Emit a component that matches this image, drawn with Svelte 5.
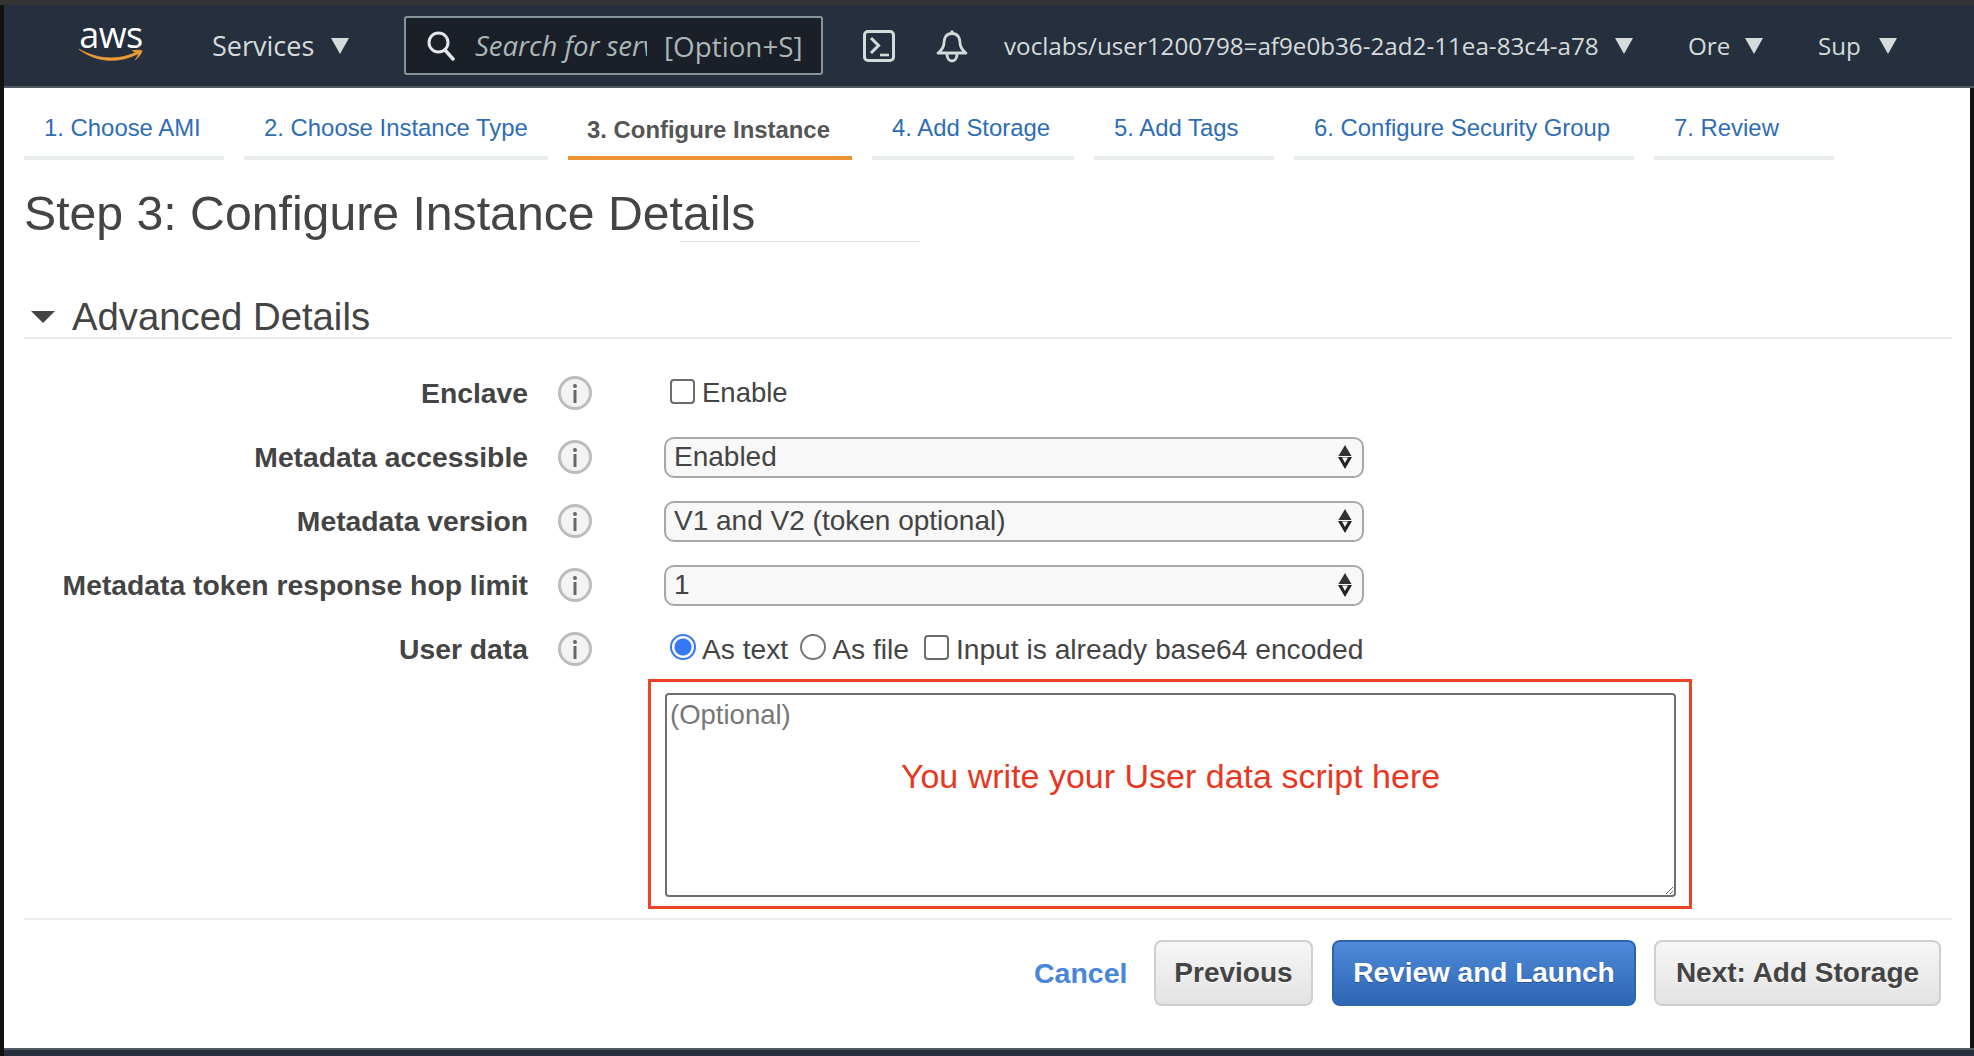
<script>
  const tabs = [
    { label: '1. Choose AMI', w: 200 },
    { label: '2. Choose Instance Type', w: 304 },
    { label: '3. Configure Instance', w: 284, active: true },
    { label: '4. Add Storage', w: 202 },
    { label: '5. Add Tags', w: 180 },
    { label: '6. Configure Security Group', w: 340 },
    { label: '7. Review', w: 180 }
  ];
  const selects = [
    { label: 'Metadata accessible', value: 'Enabled' },
    { label: 'Metadata version', value: 'V1 and V2 (token optional)' },
    { label: 'Metadata token response hop limit', value: '1' }
  ];
</script>

{#snippet info()}
  <svg class="info" viewBox="0 0 34 34" width="34" height="34" aria-hidden="true">
    <circle cx="17" cy="17" r="15.500" fill="#f3f3f3" stroke="#bdbdbd" stroke-width="3" />
    <circle cx="17" cy="10" r="2" fill="#666" />
    <rect x="15.500" y="14" width="3" height="13" fill="#666" />
  </svg>
{/snippet}

{#snippet caret(cls)}
  <svg class={cls} viewBox="0 0 20 18" aria-hidden="true"><path d="M1 1h18L10 17z" fill="#d5dbdb" /></svg>
{/snippet}

<div class="frame">
  <header class="nav">
    <div class="logo">
      <span class="aws">aws</span>
      <svg class="smile" viewBox="0 0 68 16" aria-hidden="true">
        <path d="M1 2C10 9 22 13.500 34 13.500C44 13.500 53 11 60 7.500L62.500 6.500C62 8.500 60.500 11 59 13C62 10.500 65 7.500 66 3.500C63 3 59.500 3 56 3.500L59.500 5.500C50 9.500 42 11 34 11C22 11 11 7.500 1 2Z" fill="#ec9a32" stroke="#ec9a32" stroke-width=".8" stroke-linejoin="round" />
      </svg>
    </div>
    <span class="menu services">Services</span>
    {@render caret('caret services-caret')}
    <div class="search">
      <svg class="mag" viewBox="0 0 28 30" aria-hidden="true">
        <circle cx="11.500" cy="11.500" r="9.500" fill="none" stroke="#e3e7e7" stroke-width="3" />
        <path d="M18 19l8 9" stroke="#e3e7e7" stroke-width="3.400" stroke-linecap="round" />
      </svg>
      <span class="placeholder">Search for serv</span>
      <span class="shortcut">[Option+S]</span>
    </div>
    <svg class="console" viewBox="0 0 32 32" aria-hidden="true">
      <rect x="1.500" y="1.500" width="29" height="29" rx="3.500" fill="none" stroke="#d5dbdb" stroke-width="3" />
      <path d="M8 8l7.500 7.500L8 23" fill="none" stroke="#d5dbdb" stroke-width="3" />
      <path d="M17 25h9" stroke="#d5dbdb" stroke-width="2.600" />
    </svg>
    <svg class="bell" viewBox="0 0 32 34" aria-hidden="true">
      <path d="M16 1.500v3M16 4.500c-5.500 0-8 4-8 9 0 5-2 7.500-6 10.500h28c-4-3-6-5.500-6-10.500 0-5-2.500-9-8-9z" fill="none" stroke="#d5dbdb" stroke-width="2.800" stroke-linejoin="round" />
      <path d="M11 25c0 4 2 7 5 7s5-3 5-7" fill="none" stroke="#d5dbdb" stroke-width="2.800" />
    </svg>
    <span class="menu account">voclabs/user1200798=af9e0b36-2ad2-11ea-83c4-a78</span>
    {@render caret('caret account-caret')}
    <span class="menu region">Ore</span>
    {@render caret('caret region-caret')}
    <span class="menu support">Sup</span>
    {@render caret('caret support-caret')}
  </header>

  <main class="panel">
    <nav class="tabs">
      {#each tabs as t}
        <a class="tab" class:active={t.active} style="width: {t.w}px" href="#top">{t.label}</a>
      {/each}
    </nav>

    <div class="title-row">
      <h1>Step 3: Configure Instance Details</h1>
      <span class="stray"></span>
    </div>

    <h2 class="section">
      <svg class="tri" viewBox="0 0 24 12" aria-hidden="true"><path d="M0 0h24L12 12z" fill="#444" /></svg>
      Advanced Details
    </h2>

    <div class="form">
      <div class="row">
        <span class="label">Enclave</span>
        {@render info()}
        <div class="opts">
          <span class="check"></span><span class="opt enable">Enable</span>
        </div>
      </div>

      {#each selects as s}
        <div class="row">
          <span class="label">{s.label}</span>
          {@render info()}
          <div class="select">
            <span>{s.value}</span>
            <svg class="updown" viewBox="0 0 18 24" aria-hidden="true">
              <path d="M9 0l6.500 11h-13z" fill="#333" />
              <path d="M2 12h14l-7 12z" fill="#222" />
              <path d="M6 12.500h6L9 18z" fill="#f8f8f8" />
            </svg>
          </div>
        </div>
      {/each}

      <div class="row">
        <span class="label">User data</span>
        {@render info()}
        <div class="opts">
          <span class="radio on"></span><span class="opt text">As text</span>
          <span class="radio"></span><span class="opt file">As file</span>
          <span class="check small"></span><span class="opt">Input is already base64 encoded</span>
        </div>
      </div>
    </div>

    <div class="callout">
      <div class="ta-wrap">
        <textarea placeholder="(Optional)"></textarea>
        <span class="note">You write your User data script here</span>
      </div>
    </div>

    <footer class="actions">
      <a class="cancel" href="#top">Cancel</a>
      <button class="btn prev">Previous</button>
      <button class="btn primary">Review and Launch</button>
      <button class="btn next">Next: Add Storage</button>
    </footer>
  </main>

  <div class="bottom"></div>
</div>

<style>
  :global(body) { margin: 0; background: #0c0c0c; }
  .frame {
    width: 1974px; height: 1056px; overflow: hidden; display: flex; flex-direction: column;
    background: #111; font-family: "Liberation Sans", Arial, sans-serif; box-sizing: border-box;
    border-top: 5px solid #333;
  }
  .nav {
    flex: none; height: 83px; margin-left: 4px; background: #252f3e; border-bottom: 2px solid #545b64;
    box-sizing: border-box;
    display: flex; align-items: center; color: #d5dbdb; font-family: "Open Sans", sans-serif;
  }
  .logo { width: 66px; margin-left: 74px; display: flex; flex-direction: column; align-items: center; margin-top: -4px; }
  .aws { color: #fff; font: 400 36px/27px "Open Sans", sans-serif; letter-spacing: -.5px; height: 25px; margin-top: -3px; }
  .smile { width: 66px; height: 16px; margin-top: 1px; }
  .menu { font-size: 25px; color: #d5dbdb; white-space: nowrap; }
  .services { margin-left: 68px; width: 118px; font-size: 27px; }
  .caret { width: 20px; height: 18px; flex: none; }
  .services-caret { margin-right: 54px; }
  .search {
    width: 419px; height: 59px; box-sizing: border-box; background: #1a1f28; border: 2px solid #87959b;
    border-radius: 3px; display: flex; align-items: center; flex: none;
  }
  .mag { width: 28px; height: 30px; margin-left: 21px; flex: none; }
  .placeholder {
    margin-left: 20px; width: 172px; overflow: hidden; white-space: nowrap; flex: none;
    font-style: italic; font-size: 27.500px; color: #aab7b8;
  }
  .shortcut { margin-left: 17px; font-size: 27.800px; color: #aab7b8; white-space: nowrap; }
  .console { width: 32px; height: 32px; margin-left: 40px; flex: none; }
  .bell { width: 32px; height: 34px; margin-left: 41px; flex: none; }
  .account { margin-left: 36px; width: 610px; font-size: 24.200px; }
  .account-caret { margin-right: 54px; }
  .region { width: 56px; font-size: 24.200px; }
  .region-caret { margin-right: 54px; }
  .support { width: 60px; font-size: 24.200px; }

  .panel {
    flex: none; width: 1966px; height: 960px; margin-left: 4px; background: #fff; color: #444;
    position: relative; box-sizing: border-box; padding: 0 18px 0 20px;
  }
  .tabs { display: flex; gap: 20px; height: 72px; }
  .tab {
    box-sizing: border-box; height: 72px; border-bottom: 4px solid #eaeded; text-decoration: none;
    color: #2e6db5; font-size: 23.900px; padding: 26px 0 0 20px; line-height: 28px; white-space: nowrap;
  }
  .tab.active { border-bottom-color: #ec9432; color: #555; font-weight: 700; padding: 28px 0 0 19px; }

  .title-row { height: 91px; position: relative; }
  h1 { margin: 0; padding-top: 27px; font-weight: 400; font-size: 48.200px; line-height: 52px; color: #444; }
  .stray { position: absolute; left: 656px; top: 81px; width: 240px; height: 1px; background: #ddd; }

  .section {
    margin: 0; height: 88px; box-sizing: border-box; border-bottom: 2px solid #eaeded; padding-top: 45px;
    font-weight: 400; font-size: 38.300px; line-height: 38px; color: #444; display: flex; align-items: center; gap: 17px;
    width: 1928px;
  }
  .tri { width: 24px; height: 12px; margin-left: 7px; margin-top: 0; flex: none; }

  .form { display: flex; flex-direction: column; }
  .row { display: flex; align-items: center; height: 64px; }
  .row:first-child { margin-top: 22px; }
  .label { width: 504px; text-align: right; font-weight: 700; font-size: 28.300px; color: #444; white-space: nowrap; }
  .info { flex: none; margin-left: 30px; }
  .opts { display: flex; align-items: center; margin-left: 78px; font-size: 28.200px; color: #444; }
  .opt { white-space: nowrap; }
  .opt.enable { font-size: 27.500px; }
  .check {
    width: 25px; height: 25px; box-sizing: border-box; border: 2px solid #6b6b6b; border-radius: 4px;
    background: #fff; margin-right: 7px; margin-top: -4px; flex: none;
  }
  .check.small { margin-left: 13px; margin-right: 7px; }
  .radio {
    width: 26px; height: 26px; box-sizing: border-box; border: 2px solid #767676; border-radius: 50%;
    background: #fff; margin-right: 6px; margin-top: -4px; flex: none;
  }
  .radio.on { border: 2px solid #3478f6; background: radial-gradient(circle, #3478f6 0 8px, #fff 9px); }
  .opt.text { margin-right: 12px; }
  .opt.file { margin-right: 2px; }
  .select {
    width: 700px; height: 41px; margin-left: 72px; box-sizing: border-box; background: #f8f8f8;
    border: 2px solid #a8a8a8; border-radius: 10px; display: flex; align-items: center; padding: 0 8px 0 8px;
    font-size: 28px; color: #444; justify-content: space-between;
  }
  .updown { width: 18px; height: 24px; flex: none; }

  .callout {
    width: 1044px; height: 230px; box-sizing: border-box; margin: -2px 0 0 624px; border: 3px solid #ea4325;
    padding: 11px 13px 9px 14px;
  }
  .ta-wrap { position: relative; height: 100%; }
  textarea {
    display: block; width: 100%; height: 100%; box-sizing: border-box; border: 2px solid #707070; border-radius: 4px;
    background: #fff; font: 27.500px/32px "Liberation Sans", Arial, sans-serif; padding: 4px 3px; resize: both; outline: none;
  }
  textarea::placeholder { color: #777; opacity: 1; }
  .note {
    position: absolute; left: 0; right: 0; top: 64px; text-align: center; font-size: 34px; line-height: 38px;
    color: #e8371f; pointer-events: none;
  }

  .actions {
    width: 1928px; margin-top: 9px; border-top: 2px solid #eaeded; box-sizing: border-box; height: 88px;
    display: flex; align-items: flex-start; padding-top: 20px;
  }
  .cancel {
    margin-left: 1010px; width: 92px; margin-right: 28px; line-height: 66px; font-size: 28.500px; font-weight: 700;
    color: #4a86d8; text-decoration: none; white-space: nowrap;
  }
  .btn {
    height: 66px; box-sizing: border-box; border-radius: 8px; font: 700 28px "Liberation Sans", Arial, sans-serif;
    padding: 0; white-space: nowrap; border: 2px solid #cfcfcf; color: #444;
    background: linear-gradient(#f6f6f6, #e3e3e3); text-shadow: 0 1px 0 #fff;
  }
  .prev { width: 159px; margin-right: 19px; }
  .primary {
    width: 304px; margin-right: 18px; color: #fff; border-color: #2b64b0; text-shadow: 0 1px 0 #24508f;
    background: linear-gradient(#4e8ad9, #2f66b4);
  }
  .next { width: 287px; }
  .bottom { flex: none; height: 8px; margin-left: 4px; background: #252f3e; border-top: 2px solid #545b64; box-sizing: border-box; }
</style>
